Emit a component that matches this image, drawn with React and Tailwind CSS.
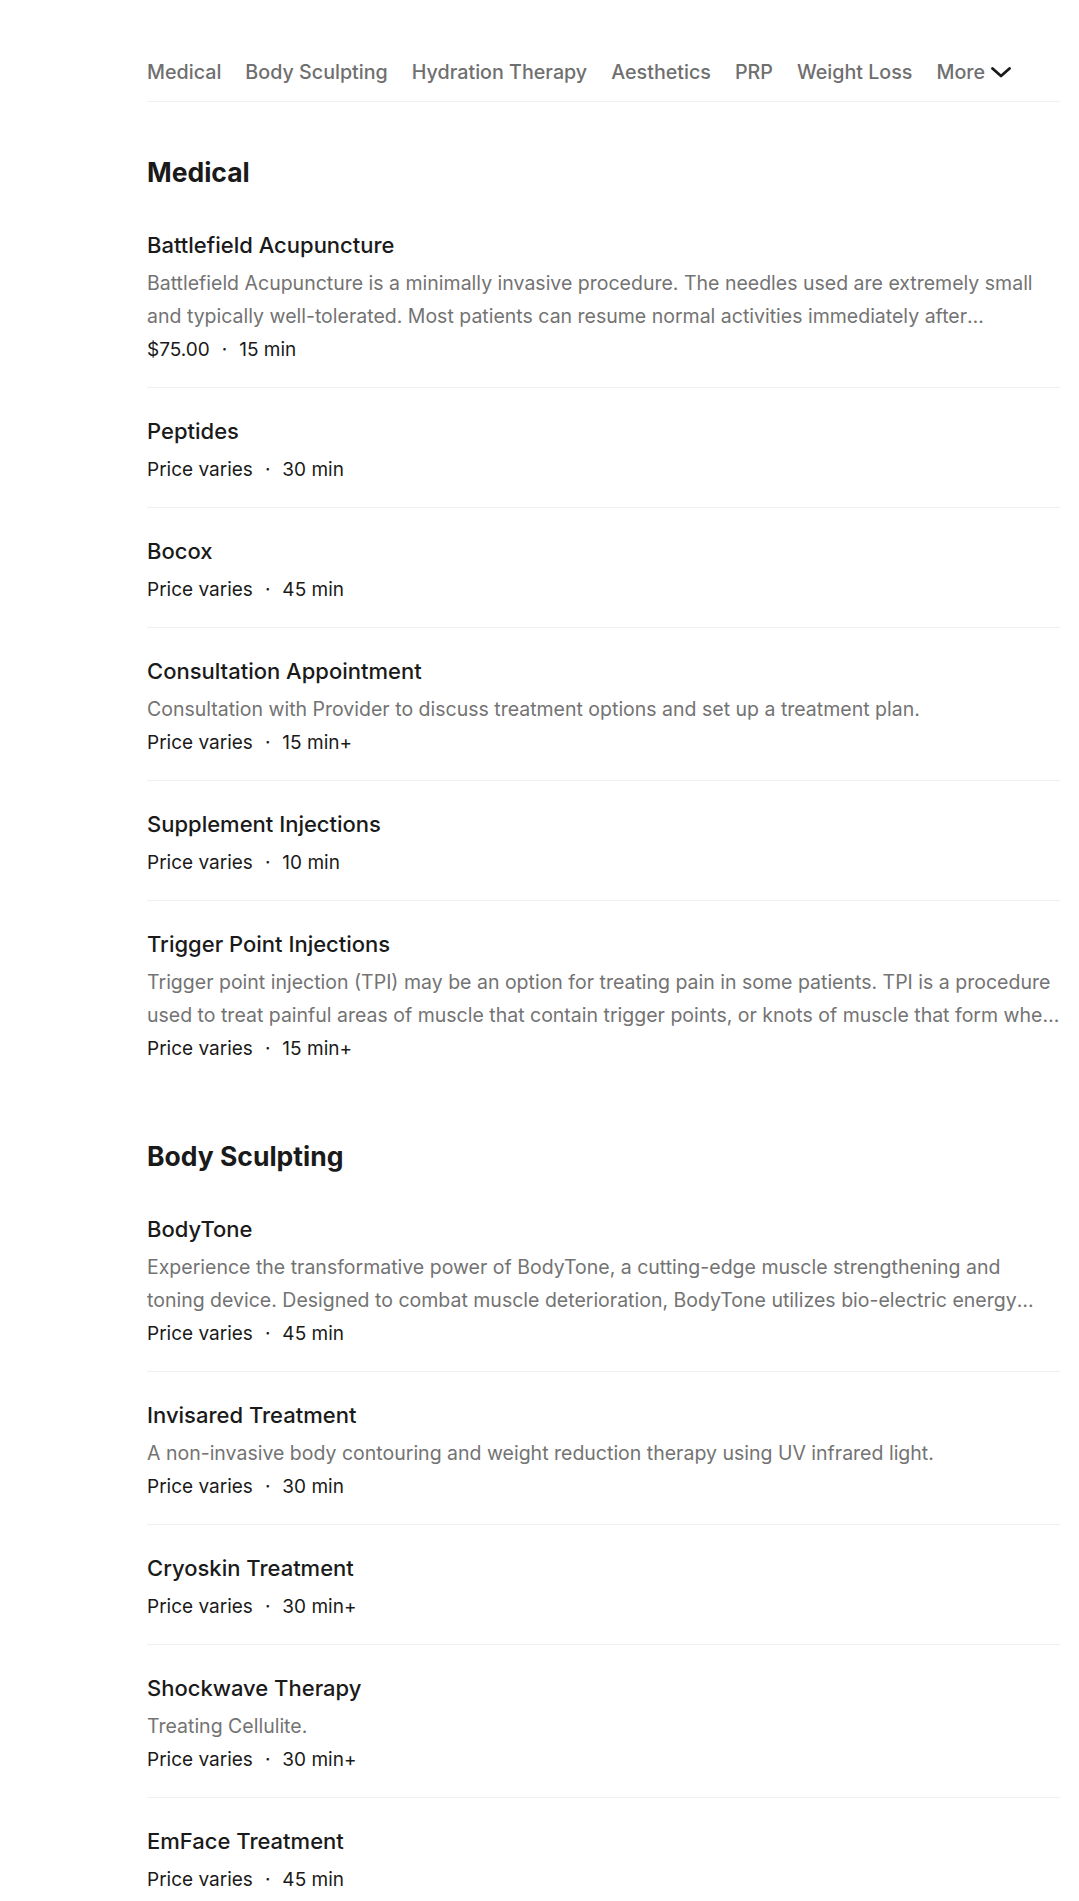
import React from "react";

const sections = [
  {
    title: "Medical",
    items: [
      {
        name: "Battlefield Acupuncture",
        desc: "Battlefield Acupuncture is a minimally invasive procedure. The needles used are extremely small and typically well-tolerated. Most patients can resume normal activities immediately after treatment.",
        price: "$75.00",
        time: "15 min",
      },
      { name: "Peptides", price: "Price varies", time: "30 min" },
      { name: "Bocox", price: "Price varies", time: "45 min" },
      {
        name: "Consultation Appointment",
        desc: "Consultation with Provider to discuss treatment options and set up a treatment plan.",
        price: "Price varies",
        time: "15 min+",
      },
      { name: "Supplement Injections", price: "Price varies", time: "10 min" },
      {
        name: "Trigger Point Injections",
        desc: "Trigger point injection (TPI) may be an option for treating pain in some patients. TPI is a procedure used to treat painful areas of muscle that contain trigger points, or knots of muscle that form when muscles do not relax.",
        price: "Price varies",
        time: "15 min+",
      },
    ],
  },
  {
    title: "Body Sculpting",
    items: [
      {
        name: "BodyTone",
        desc: "Experience the transformative power of BodyTone, a cutting-edge muscle strengthening and toning device. Designed to combat muscle deterioration, BodyTone utilizes bio-electric energy stimulating muscle contractions.",
        price: "Price varies",
        time: "45 min",
      },
      {
        name: "Invisared Treatment",
        desc: "A non-invasive body contouring and weight reduction therapy using UV infrared light.",
        price: "Price varies",
        time: "30 min",
      },
      { name: "Cryoskin Treatment", price: "Price varies", time: "30 min+" },
      {
        name: "Shockwave Therapy",
        desc: "Treating Cellulite.",
        price: "Price varies",
        time: "30 min+",
      },
      { name: "EmFace Treatment", price: "Price varies", time: "45 min" },
    ],
  },
];

const nav = ["Medical", "Body Sculpting", "Hydration Therapy", "Aesthetics", "PRP", "Weight Loss"];

function Item({ item, last }) {
  return (
    <div className={"pt-[28px] pb-[21px] " + (last ? "" : "border-b border-[#f0f0f0]")}>
      <div className="text-[22px] leading-[30px] font-medium text-[#1a1a1a] mb-[7px]">{item.name}</div>
      {item.desc && (
        <div className="text-[19.5px] leading-[33px] text-[#737373] line-clamp-2">{item.desc}</div>
      )}
      <div className="flex items-center text-[19px] leading-[33px] text-[#1a1a1a]">
        <span>{item.price}</span>
        <span className="mx-[12px]">·</span>
        <span>{item.time}</span>
      </div>
    </div>
  );
}

export default function App() {
  return (
    <div
      className="bg-white min-h-[1901px] pl-[147px] pr-[19px]"
      style={{ fontFamily: "Inter, 'Liberation Sans', sans-serif" }}
    >
      <div className="pt-[58px] pb-[15px] border-b border-[#f0f0f0] flex items-center gap-[24px] text-[19.7px] leading-[28px] font-medium text-[#6f6f6f] whitespace-nowrap">
        {nav.map((n) => (
          <span key={n}>{n}</span>
        ))}
        <span className="flex items-center gap-[6px]">
          More
          <svg width="20" height="11" viewBox="0 0 20 11" fill="none">
            <path d="M1.5 1.5 L10 9 L18.5 1.5" stroke="#1a1a1a" strokeWidth="2.8" strokeLinecap="round" strokeLinejoin="round" />
          </svg>
        </span>
      </div>
      {sections.map((s) => (
        <div key={s.title} className="pt-[52px]">
          <h2 className="text-[26.5px] leading-[36px] font-bold text-[#1a1a1a] mb-[12px]">{s.title}</h2>
          {s.items.map((it, i) => (
            <Item key={it.name} item={it} last={i === s.items.length - 1 && s.title === "Medical"} />
          ))}
        </div>
      ))}
    </div>
  );
}
